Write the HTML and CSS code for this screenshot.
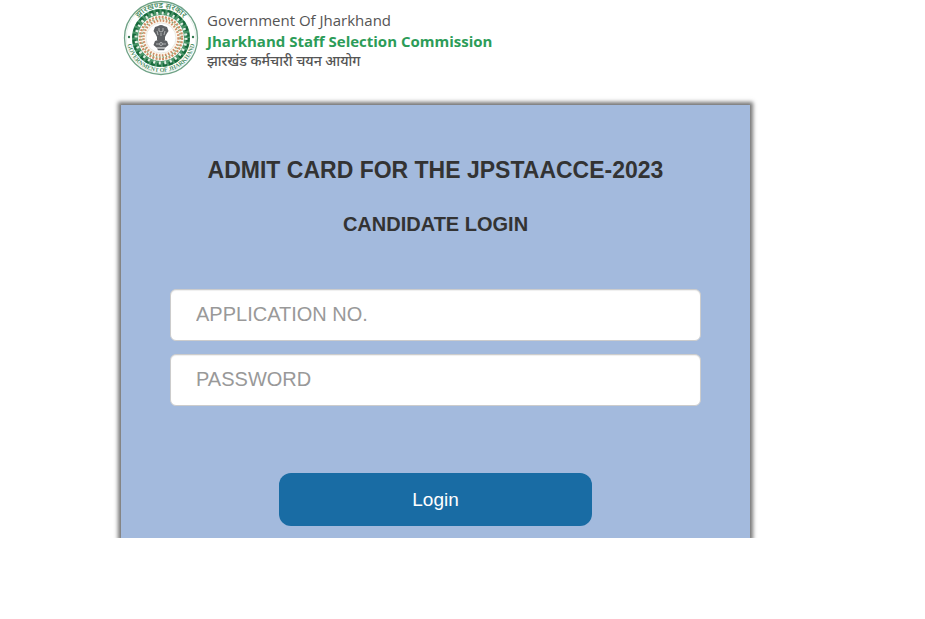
FILE: index.html
```
<!DOCTYPE html>
<html lang="en">
<head>
<meta charset="utf-8">
<meta name="viewport" content="width=device-width, initial-scale=1">
<title>Candidate Login</title>
<link rel="stylesheet" href="styles.css">
</head>
<body>
<div class="page">
  <header class="brand">
    <svg class="emblem" viewBox="0 0 76 76" aria-hidden="true">
      <defs>
        <path id="arc-top" d="M8 38a30 30 0 0 1 60 0"/>
        <path id="arc-bottom" d="M4 38a34 34 0 0 0 68 0"/>
      </defs>
      <circle cx="38" cy="38" r="36.500" fill="#fff" stroke="#6fa286" stroke-width="1.300"/>
      <circle cx="38" cy="38" r="34.800" fill="none" stroke="#d5e5db" stroke-width=".6"/>
      <text class="ring-hindi"><textPath href="#arc-top" startOffset="50%" text-anchor="middle">झारखण्ड सरकार</textPath></text>
      <text class="ring-latin"><textPath href="#arc-bottom" startOffset="50%" text-anchor="middle">GOVERNMENT OF JHARKHAND</textPath></text>
      <circle cx="6" cy="37" r="1.200" fill="#357a50"/>
      <circle cx="70" cy="37" r="1.200" fill="#357a50"/>
      <circle cx="38" cy="38" r="26" fill="none" stroke="#4b9669" stroke-width="6"/>
      <circle cx="38" cy="38" r="27" fill="none" stroke="#17693c" stroke-width="3.500" stroke-dasharray="4 2.060"/>
      <circle cx="38" cy="38" r="25" fill="none" stroke="#e4f0e6" stroke-width="3" stroke-dasharray="2 3.610"/>
      <circle cx="38" cy="38" r="21" fill="#fbf6ec" stroke="#cf9065" stroke-width="2.400" stroke-dasharray="2 1.300"/>
      <circle cx="38" cy="38" r="17.500" fill="none" stroke="#d08f67" stroke-width="2.400" stroke-dasharray="1.600 1.500"/>
      <circle cx="38" cy="38" r="19.300" fill="none" stroke="#7fa878" stroke-width="1.600" stroke-dasharray="1.200 2.200"/>
      <circle cx="38" cy="38" r="15" fill="#fff" stroke="#dfe2dc" stroke-width=".7"/>
      <g fill="#5d6063">
        <path d="M35 26q3-2 6 0l3 1 1.500 4-2 3-1.500 3h-8l-1.500-3-2-3 1.500-4z"/>
        <path d="M34 37h8v3h-8z"/>
        <path d="M32 41q6-2.500 12 0l1.500 4-3 2.500h-9L30.500 45z"/>
        <path d="M34 48.500h8l-1 1.700h-6z"/>
      </g>
      <g fill="none" stroke="#d0d2d2" stroke-width=".7">
        <path d="M36 28v3l2 1 2-1v-3M34 31l1 4M42 31l-1 4M38 33v3M33 44h3M40 44h3"/>
        <circle cx="38" cy="44" r="1.500"/>
      </g>
    </svg>
    <div class="brand-text">
      <p class="government">Government Of Jharkhand</p>
      <p class="commission">Jharkhand Staff Selection Commission</p>
      <p class="commission-hindi" lang="hi">झारखंड कर्मचारी चयन आयोग</p>
    </div>
  </header>
  <main class="login-area">
    <form class="card">
      <h1>ADMIT CARD FOR THE JPSTAACCE-2023</h1>
      <h2>CANDIDATE LOGIN</h2>
      <div class="fields">
        <input type="text" aria-label="Application number" placeholder="APPLICATION NO.">
        <input type="password" aria-label="Password" placeholder="PASSWORD">
      </div>
      <button type="button">Login</button>
    </form>
  </main>
</div>
</body>
</html>
```
FILE: styles.css
```
* { box-sizing: border-box; }
body {
  margin: 0;
  background: #fff;
  color: #333;
  font-family: "Liberation Sans", Arial, sans-serif;
}
h1, h2, p { margin: 0; }
.page { padding: 0 167px 0 113px; }
.brand {
  display: flex;
  align-items: flex-start;
  gap: 8px;
  height: 96px;
  padding-left: 10px;
}
.emblem { width: 76px; height: 76px; flex: none; }
.ring-hindi { fill: #4f9168; font: 600 8px "Noto Sans", sans-serif; }
.ring-latin { fill: #4f9168; font: 700 6px "Liberation Serif", serif; }
.brand-text {
  padding-top: 9px;
  font-family: "Open Sans", "Noto Sans", sans-serif;
  white-space: nowrap;
}
.government { color: #555; font-size: 15px; line-height: 22px; }
.commission { color: #2c9c58; font-size: 15px; font-weight: 700; line-height: 20px; }
.commission-hindi { color: #555; font-size: 14px; font-weight: 500; line-height: 20px; }
.login-area { overflow: hidden; padding: 9px 8px 0; }
.card {
  display: flex;
  flex-direction: column;
  align-items: center;
  padding: 52px 49px 12px;
  background: #a3badd;
  box-shadow: 0 0 4px 3px #777;
}
h1 { font-size: 23px; line-height: 26px; }
h2 { margin-top: 28px; font-size: 20px; line-height: 26px; }
.fields {
  display: grid;
  gap: 13px;
  width: 100%;
  margin-top: 52px;
}
input {
  width: 100%;
  height: 52px;
  padding: 0 25px 2px;
  border: 1px solid #ccc;
  border-radius: 6px;
  background: #fff;
  box-shadow: inset 0 1px 1px #0001;
  color: #333;
  font: 20px "Liberation Sans", Arial, sans-serif;
}
input::placeholder { color: #999; opacity: 1; }
button {
  width: 59%;
  height: 53px;
  margin-top: 67px;
  border: 0;
  border-radius: 12px;
  background: #196ca4;
  color: #fff;
  font: 19px "Liberation Sans", Arial, sans-serif;
}
```
